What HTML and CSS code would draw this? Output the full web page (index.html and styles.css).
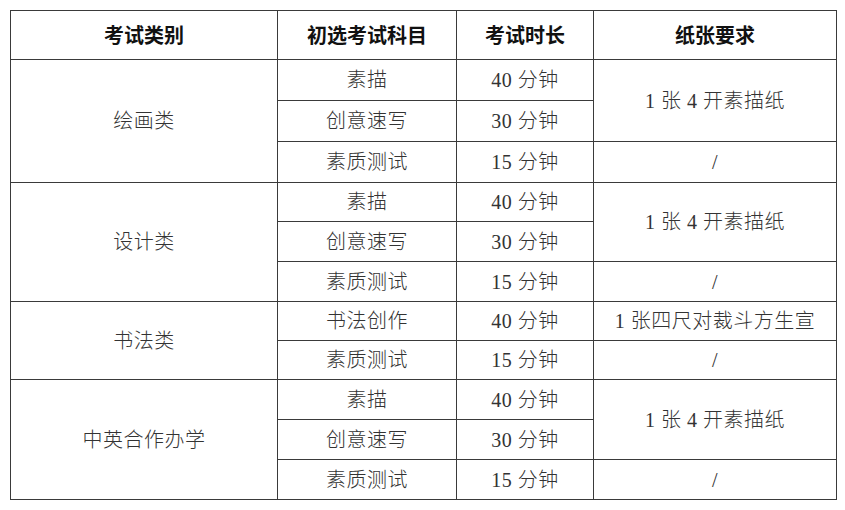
FILE: index.html
```html
<!DOCTYPE html>
<html lang="zh">
<head>
<meta charset="utf-8">
<link rel="stylesheet" href="styles.css">
</head>
<body>
<table class="exam">
  <colgroup>
    <col class="c1"><col class="c2"><col class="c3"><col class="c4">
  </colgroup>
  <thead>
    <tr class="head"><th>考试类别</th><th>初选考试科目</th><th>考试时长</th><th>纸张要求</th></tr>
  </thead>
  <tbody>
    <tr class="tall"><td rowspan="3">绘画类</td><td>素描</td><td>40 分钟</td><td rowspan="2">1 张 4 开素描纸</td></tr>
    <tr class="tall"><td>创意速写</td><td>30 分钟</td></tr>
    <tr class="tall"><td>素质测试</td><td>15 分钟</td><td>/</td></tr>
    <tr class="short"><td rowspan="3">设计类</td><td>素描</td><td>40 分钟</td><td rowspan="2">1 张 4 开素描纸</td></tr>
    <tr><td>创意速写</td><td>30 分钟</td></tr>
    <tr><td>素质测试</td><td>15 分钟</td><td>/</td></tr>
    <tr class="short"><td rowspan="2">书法类</td><td>书法创作</td><td>40 分钟</td><td>1 张四尺对裁斗方生宣</td></tr>
    <tr class="short"><td>素质测试</td><td>15 分钟</td><td>/</td></tr>
    <tr><td rowspan="3">中英合作办学</td><td>素描</td><td>40 分钟</td><td rowspan="2">1 张 4 开素描纸</td></tr>
    <tr><td>创意速写</td><td>30 分钟</td></tr>
    <tr><td>素质测试</td><td>15 分钟</td><td>/</td></tr>
  </tbody>
</table>
</body>
</html>
```
FILE: styles.css
```css
html, body {
  margin: 0;
  padding: 0;
  background: #ffffff;
}
body {
  padding: 10px 0 0 10px;
}
.exam {
  border-collapse: collapse;
  table-layout: fixed;
  width: 826px;
  font-family: "Liberation Serif", "Noto Sans CJK SC", serif;
  font-size: 20px;
  color: #333333;
}
.c1 { width: 267px; }
.c2 { width: 179px; }
.c3 { width: 137px; }
.c4 { width: 243px; }
.exam th, .exam td {
  border: 1px solid #3a3a3a;
  padding: 0;
  text-align: center;
  vertical-align: middle;
  line-height: 20px;
}
.exam td {
  height: 39px;
  font-weight: 300;
  letter-spacing: 0.5px;
}
.exam tr.tall td {
  height: 40px;
}
.exam tr.short td {
  height: 38px;
}
.exam th {
  height: 48px;
  font-family: "Noto Sans CJK SC", sans-serif;
  font-weight: 700;
  font-size: 20px;
  color: #111111;
}
```
